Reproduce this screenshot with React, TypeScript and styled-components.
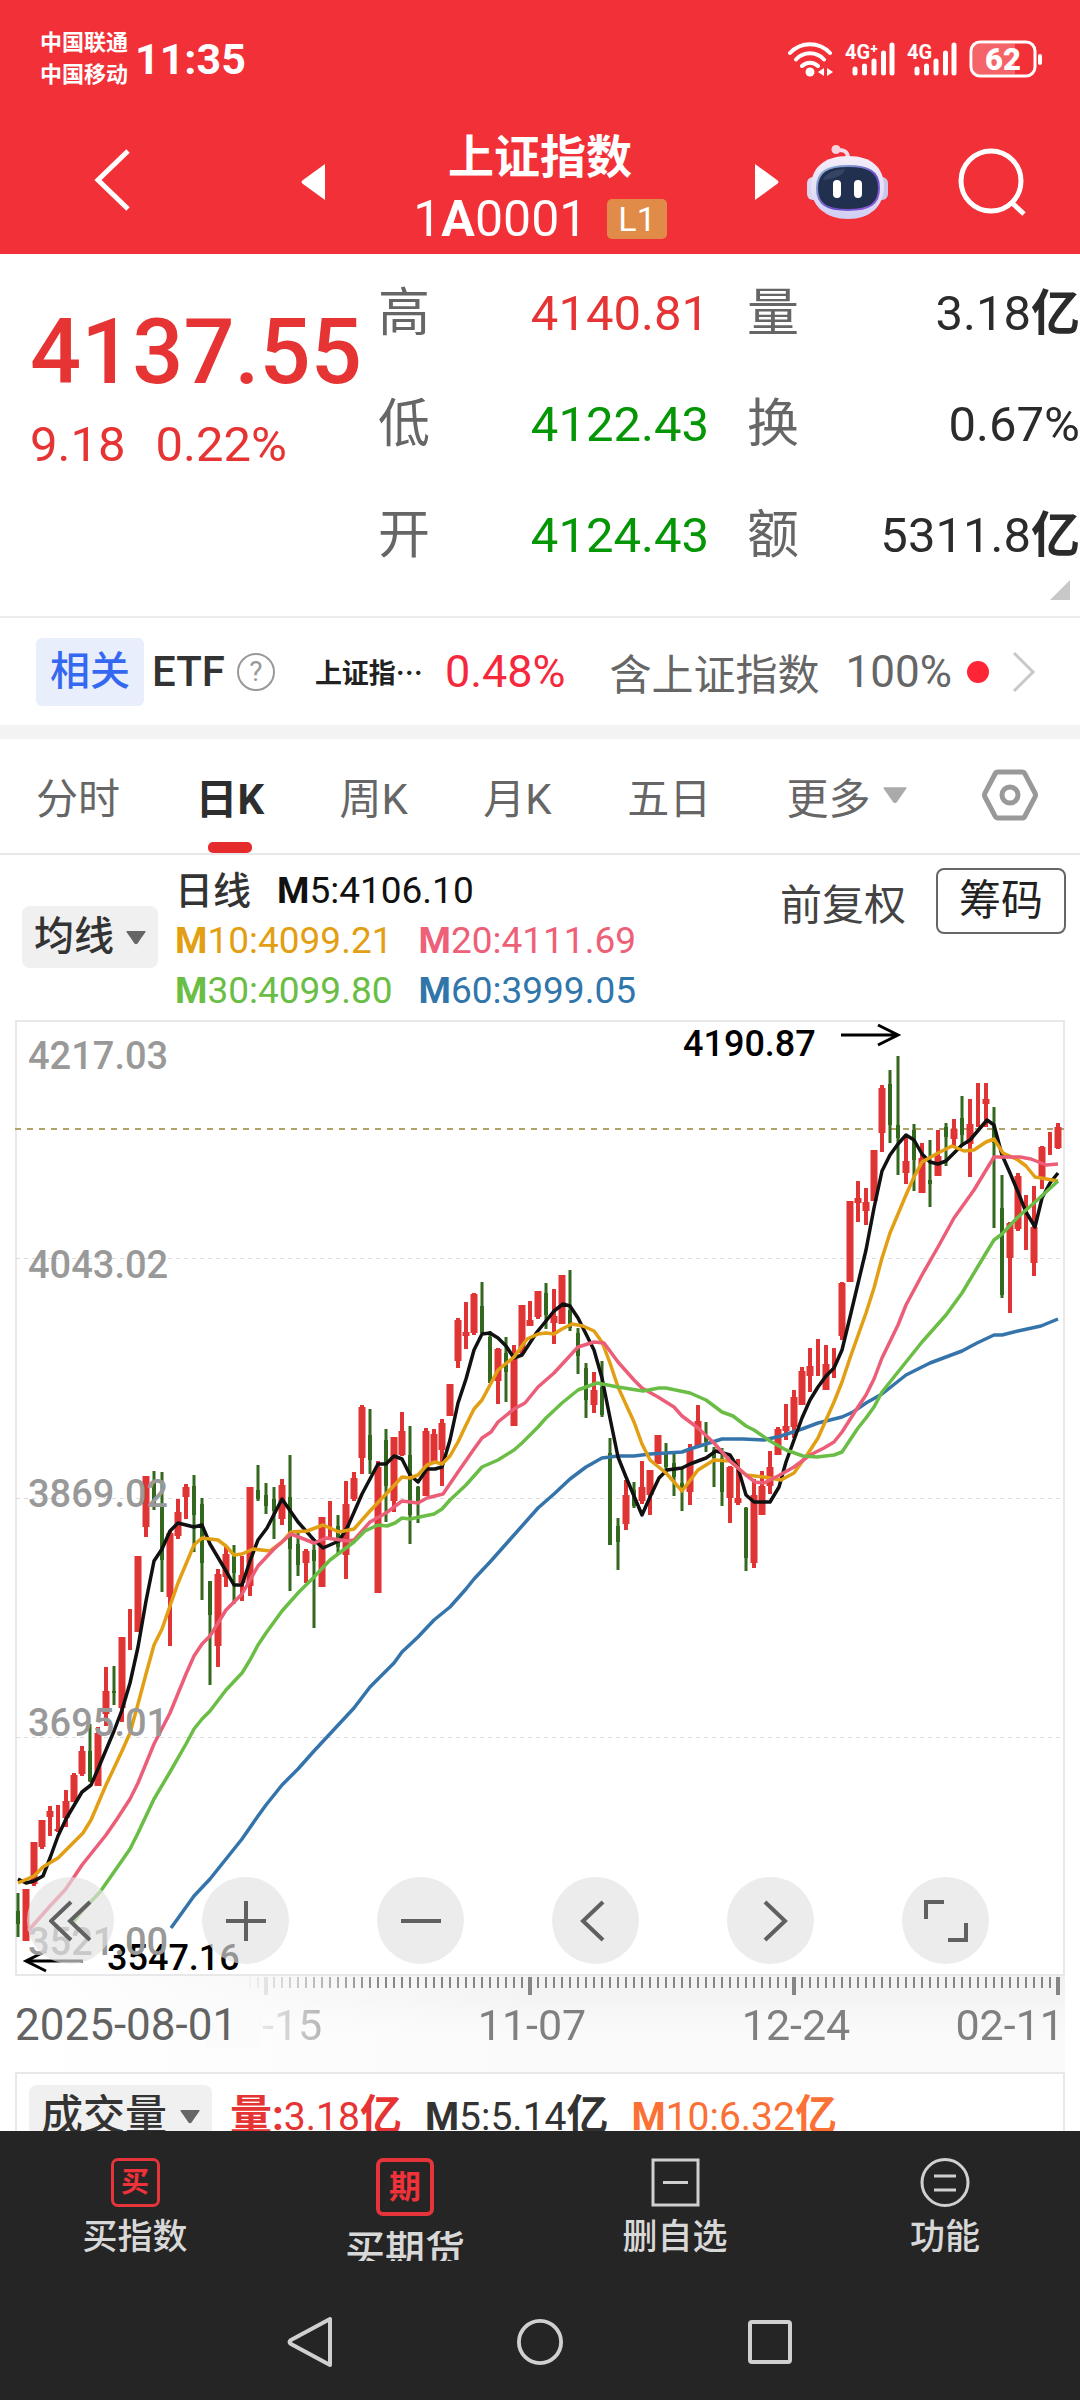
import React from "react";
import styled, { createGlobalStyle } from "styled-components";

const RED = "#f23037";
const UP = "#e63333";
const DOWN = "#059605";

const GlobalStyle = createGlobalStyle`
  *, *::before, *::after { box-sizing: border-box; }
  body {
    margin: 0;
    background: #fff;
    color: #333;
    font-family: Roboto, "Noto Sans CJK SC", sans-serif;
    white-space: nowrap;
  }
  button, select {
    font: inherit;
    color: inherit;
    border: 0;
    margin: 0;
    padding: 0;
    background: none;
    cursor: pointer;
  }
  svg { display: block; flex: none; }
  h1, dl, dd, dt, p { margin: 0; font-weight: inherit; }
`;

const Screen = styled.div`
  display: flex;
  flex-direction: column;
  height: 100vh;
  overflow: hidden;
`;

/* ---------- header ---------- */

const Header = styled.header`
  flex: none;
  background: ${RED};
  color: #fff;
`;

const StatusBar = styled.div`
  display: flex;
  align-items: center;
  height: 110px;
  padding: 8px 37px 0 40px;
`;

const Carriers = styled.div`
  font-size: 22px;
  font-weight: 700;
  line-height: 32px;
`;

const Clock = styled.time`
  margin-left: 7px;
  font-size: 43px;
  font-weight: 700;
  line-height: 48px;
`;

const StatusIcons = styled.div`
  display: flex;
  align-items: center;
  gap: 12px;
  margin-left: auto;
`;

const TitleBar = styled.div`
  display: grid;
  grid-template-columns: 1fr 478px 1fr;
  align-items: center;
  height: 144px;
`;

const BackArea = styled.div`
  padding: 0 0 0 94px;
`;

const IndexSwitcher = styled.div`
  display: flex;
  align-items: center;
  justify-content: space-between;
`;

const IndexTitle = styled.div`
  display: flex;
  flex-direction: column;
  align-items: center;
  padding-top: 10px;
`;

const IndexName = styled.h1`
  font-size: 46px;
  font-weight: 700;
  line-height: 64px;
`;

const IndexCode = styled.p`
  display: flex;
  align-items: center;
  gap: 20px;
  font-size: 50px;
  line-height: 60px;
`;

const LevelBadge = styled.span`
  padding: 0 11px;
  border-radius: 5px;
  background: #e08c48;
  font-size: 34px;
  line-height: 40px;
`;

const TitleActions = styled.div`
  display: flex;
  align-items: center;
  justify-content: space-between;
  padding: 0 54px 0 28px;
`;

/* ---------- quote ---------- */

const Quote = styled.section`
  position: relative;
  flex: none;
  display: grid;
  grid-template-columns: 378fr 702fr;
  padding: 4px 0 25px;
  border-bottom: 2px solid #ececec;
`;

const PriceBlock = styled.div`
  padding: 45px 0 0 30px;
  color: ${UP};
`;

const Price = styled.p`
  font-size: 90px;
  font-weight: 500;
  line-height: 100px;
`;

const Change = styled.p`
  display: flex;
  gap: 30px;
  margin-top: 12px;
  font-size: 49px;
  line-height: 60px;
`;

const Stats = styled.dl`
  display: grid;
  grid-template-columns: 331fr 333fr;
  column-gap: 38px;
  grid-auto-rows: 111px;
`;

const Stat = styled.div`
  display: flex;
  align-items: center;
  justify-content: space-between;
  font-size: 49px;
  line-height: 60px;

  dt { font-size: 52px; color: #666; }
`;

const StatValue = styled.dd<{ $color: string }>`
  color: ${(p) => p.$color};
  b { font-weight: 700; }
`;

const ExpandCorner = styled.span`
  position: absolute;
  right: 10px;
  bottom: 16px;
  width: 20px;
  height: 20px;
  background: #c8c8c8;
  clip-path: polygon(100% 0, 100% 100%, 0 100%);
`;

/* ---------- related fund strip ---------- */

const Related = styled.section`
  flex: none;
  display: flex;
  align-items: center;
  height: 107px;
  padding: 0 44px 0 36px;
  font-size: 42px;
`;

const RelatedTag = styled.span`
  padding: 0 14px;
  border-radius: 6px;
  background: #e8eefc;
  color: #3568f0;
  font-size: 40px;
  font-weight: 500;
  line-height: 68px;
`;

const RelatedKind = styled.span`
  margin: 0 12px 0 8px;
  font-weight: 500;
`;

const HelpButton = styled.button`
  width: 38px;
  height: 38px;
  border: 2px solid #999;
  border-radius: 50%;
  color: #999;
  font-size: 28px;
  line-height: 32px;
`;

const FundName = styled.span`
  margin-left: 40px;
  color: #222;
  font-size: 27px;
  font-weight: 700;
`;

const FundChange = styled.span`
  margin-left: 22px;
  color: #f5283c;
  font-size: 45px;
`;

const FundHolding = styled.a`
  display: flex;
  flex: 1;
  align-items: center;
  margin-left: 44px;
  color: #666;
  text-decoration: none;

  svg { margin-left: auto; }
`;

const Share = styled.span`
  margin-left: 26px;
  font-size: 44px;
`;

const Dot = styled.i`
  width: 22px;
  height: 22px;
  margin-left: 15px;
  border-radius: 50%;
  background: #ff2436;
`;

/* ---------- period tabs ---------- */

const Tabs = styled.nav`
  flex: none;
  display: flex;
  align-items: stretch;
  justify-content: space-between;
  height: 130px;
  padding: 0 42px 0 36px;
  border-top: 14px solid #f3f3f3;
  border-bottom: 2px solid #e8e8e8;
`;

const Tab = styled.button<{ $active?: boolean }>`
  position: relative;
  display: flex;
  align-items: center;
  gap: 12px;
  padding-bottom: 2px;
  color: ${(p) => (p.$active ? "#2e2e2e" : "#666")};
  font-size: 42px;
  font-weight: ${(p) => (p.$active ? 700 : 400)};

  &::after {
    content: "";
    display: ${(p) => (p.$active ? "block" : "none")};
    position: absolute;
    bottom: 0;
    left: 50%;
    width: 44px;
    height: 11px;
    margin-left: -22px;
    border-radius: 5px;
    background: #e62b2d;
  }
`;

/* ---------- indicators ---------- */

const Indicators = styled.section`
  flex: none;
  display: flex;
  align-items: flex-start;
  padding: 11px 14px 4px 22px;
`;

const Picker = styled.label<{ $top: number }>`
  display: flex;
  align-items: center;
  gap: 12px;
  height: 62px;
  margin-top: ${(p) => p.$top}px;
  padding: 0 12px;
  border-radius: 8px;
  background: #f0f0f0;
  color: #333;
`;

const PickerSelect = styled.select<{ $size: number }>`
  appearance: none;
  outline: none;
  font-size: ${(p) => p.$size}px;
  font-weight: 500;
  line-height: 60px;
`;

const Averages = styled.div`
  display: grid;
  margin-left: 17px;
  font-size: 37px;
  line-height: 50px;
`;

const AverageRow = styled.div<{ $gap: number }>`
  display: flex;
  gap: ${(p) => p.$gap}px;
`;

const LineName = styled.span`
  font-size: 38px;
  font-weight: 500;
`;

const Average = styled.span<{ $color: string }>`
  color: ${(p) => p.$color};
  b { font-weight: 700; }
`;

const ChartOptions = styled.div`
  display: flex;
  align-items: center;
  gap: 30px;
  margin: 2px 0 0 auto;
  color: #444;
  font-size: 42px;
`;

const ChipButton = styled.button`
  width: 130px;
  height: 66px;
  border: 2px solid #666;
  border-radius: 8px;
  color: #222;
  line-height: 60px;
`;

/* ---------- chart ---------- */

const ChartPanel = styled.section`
  position: relative;
  flex: none;
  margin: 0 15px;

  svg { width: 100%; height: auto; }
`;

const ChartTools = styled.div`
  position: absolute;
  right: 76px;
  bottom: 12px;
  left: 12px;
  display: flex;
  justify-content: space-between;
`;

const ToolButton = styled.button`
  display: grid;
  place-items: center;
  width: 87px;
  height: 87px;
  border-radius: 50%;
  background: rgba(226, 226, 226, 0.66);

  svg { width: 44px; height: 44px; }
`;

const Axis = styled.div`
  position: relative;
  flex: none;
  margin: 0 15px;
  background:
    linear-gradient(90deg, #fff, rgba(255, 255, 255, 0) 50%),
    linear-gradient(#f1f1f1, #fafafa 60%);

  svg { width: 100%; height: auto; }
`;

const VolumePanel = styled.section`
  flex: 1;
  display: flex;
  align-items: flex-start;
  min-height: 0;
  margin: 0 15px;
  padding-left: 12px;
  border: solid #e8e8e8;
  border-width: 2px 2px 0;
  overflow: hidden;
`;

const VolumeFigures = styled.div`
  display: flex;
  gap: 23px;
  margin: 12px 0 0 18px;
  font-size: 39px;
  line-height: 60px;

  em { font-style: normal; font-weight: 700; font-size: 42px; }
`;

/* ---------- bottom bars ---------- */

const BottomBar = styled.footer`
  flex: none;
  background: #252525;
  color: #d8d8d8;
`;

const Actions = styled.nav`
  display: grid;
  grid-template-columns: repeat(4, 1fr);
  height: 153px;
  padding-top: 27px;
`;

const Action = styled.button<{ $large?: boolean }>`
  display: flex;
  flex-direction: column;
  align-items: center;
  gap: ${(p) => (p.$large ? 15 : 13)}px;
  font-size: ${(p) => (p.$large ? 40 : 35)}px;
  font-weight: 500;
  line-height: ${(p) => (p.$large ? 40 : 36)}px;
`;

const ActionLabel = styled.span<{ $clip?: boolean }>`
  height: ${(p) => (p.$clip ? "30px" : "auto")};
  overflow: ${(p) => (p.$clip ? "hidden" : "visible")};
`;

const Glyph = styled.span<{ $size: number }>`
  display: grid;
  place-items: center;
  width: ${(p) => p.$size}px;
  height: ${(p) => p.$size}px;
  border: ${(p) => (p.$size > 50 ? 4 : 3)}px solid #e5343a;
  border-radius: 7px;
  color: #f0323a;
  font-size: ${(p) => (p.$size > 50 ? 32 : 28)}px;
  font-weight: 700;
`;

const SystemKeys = styled.div`
  display: flex;
  justify-content: center;
  gap: 184px;
  height: 116px;
  padding-top: 32px;
`;

const SystemKey = styled.button`
  width: 46px;
  height: 52px;
`;

/* ---------- data ---------- */

// One trading day: high, body top, body bottom, low (plot units), rising flag.
type Candle = [number, number, number, number, 0 | 1];

const candles: Candle[] = [
  [873, 891, 904, 917, 0], [869, 869, 921, 921, 1], [822, 822, 864, 866, 1], [800, 800, 827, 829, 1],
  [786, 791, 797, 816, 1], [785, 809, 811, 812, 1], [770, 781, 798, 807, 1], [753, 755, 782, 782, 1],
  [726, 731, 754, 756, 1], [704, 731, 761, 762, 0], [707, 713, 766, 766, 1], [647, 671, 694, 706, 1],
  [646, 671, 673, 685, 0], [617, 617, 688, 702, 1], [589, 610, 610, 630, 1], [536, 536, 612, 612, 1],
  [456, 456, 507, 517, 1], [451, 463, 484, 490, 0], [452, 485, 540, 572, 0], [511, 513, 577, 626, 1],
  [479, 492, 516, 519, 1], [464, 467, 477, 499, 1], [455, 466, 495, 532, 0], [478, 484, 543, 580, 0],
  [561, 561, 595, 665, 0], [549, 554, 626, 647, 1], [527, 534, 557, 567, 1], [525, 536, 553, 584, 0],
  [536, 555, 563, 581, 1], [467, 467, 566, 576, 1], [445, 470, 479, 481, 0], [463, 475, 486, 494, 0],
  [467, 479, 491, 519, 0], [459, 465, 499, 505, 1], [435, 477, 529, 571, 0], [513, 524, 545, 556, 0],
  [529, 531, 543, 563, 1], [522, 530, 541, 608, 0], [497, 497, 567, 567, 1], [481, 500, 500, 518, 1],
  [495, 506, 527, 534, 0], [461, 484, 535, 559, 1], [452, 458, 479, 481, 1], [385, 387, 438, 454, 1],
  [389, 415, 440, 454, 0], [441, 447, 573, 573, 1], [409, 420, 466, 502, 0], [417, 417, 481, 492, 1],
  [392, 411, 435, 436, 1], [406, 435, 495, 524, 0], [466, 467, 481, 503, 0], [408, 411, 476, 476, 1],
  [409, 414, 442, 442, 1], [399, 403, 430, 466, 1], [364, 364, 396, 396, 1], [298, 300, 341, 348, 1],
  [282, 312, 316, 329, 1], [273, 274, 313, 315, 1], [262, 286, 313, 313, 0], [311, 317, 363, 363, 0],
  [328, 329, 361, 384, 1], [317, 333, 352, 382, 0], [325, 339, 406, 406, 1], [285, 285, 333, 335, 1],
  [281, 300, 306, 306, 1], [271, 271, 297, 299, 1], [263, 273, 295, 309, 0], [269, 296, 303, 324, 1],
  [255, 255, 304, 304, 1], [250, 290, 308, 311, 0], [308, 313, 336, 354, 0], [343, 348, 380, 398, 0],
  [352, 370, 385, 393, 1], [341, 367, 395, 397, 0], [418, 433, 525, 525, 0], [498, 506, 522, 550, 0],
  [460, 475, 504, 510, 1], [462, 470, 486, 488, 0], [441, 467, 481, 484, 1], [450, 450, 475, 495, 1],
  [415, 415, 444, 444, 1], [423, 433, 447, 453, 0], [433, 443, 457, 476, 0], [449, 463, 472, 491, 0],
  [424, 430, 472, 485, 1], [385, 401, 427, 427, 1], [402, 415, 422, 432, 0], [427, 430, 438, 467, 0],
  [428, 438, 472, 486, 0], [446, 447, 478, 503, 1], [439, 478, 483, 485, 1], [487, 488, 538, 551, 0],
  [459, 475, 543, 548, 1], [451, 466, 495, 495, 1], [431, 447, 466, 474, 1], [407, 409, 435, 435, 1],
  [384, 406, 411, 420, 1], [370, 377, 407, 418, 1], [347, 351, 385, 385, 1], [328, 346, 356, 372, 1],
  [319, 349, 349, 356, 1], [325, 344, 370, 370, 1], [328, 348, 348, 358, 1], [262, 263, 316, 320, 1],
  [181, 181, 262, 262, 1], [161, 178, 183, 202, 1], [168, 182, 191, 205, 1], [130, 130, 181, 181, 1],
  [65, 68, 113, 132, 1], [50, 64, 105, 123, 0], [36, 105, 118, 155, 0], [117, 141, 153, 164, 1],
  [104, 110, 140, 171, 0], [123, 138, 173, 173, 1], [120, 160, 164, 187, 0], [110, 136, 156, 156, 1],
  [103, 107, 117, 146, 0], [99, 109, 119, 128, 1], [76, 98, 115, 125, 0], [79, 104, 124, 157, 1],
  [63, 90, 90, 107, 1], [63, 79, 84, 107, 1], [87, 105, 123, 208, 0], [155, 188, 275, 278, 0],
  [202, 203, 238, 293, 1], [153, 156, 209, 211, 1], [175, 200, 200, 230, 1], [166, 207, 243, 256, 1],
  [126, 127, 157, 169, 1], [112, 120, 120, 135, 1], [103, 107, 128, 129, 1],
];

const averageLines = [
  { color: "#3574ab", points: "156,908 179,876 195,859 211,839 227,819 243,796 251,785 267,765 283,749 299,731 339,688 355,667 371,651 379,643 387,632 403,617 419,600 435,587 451,569 459,559 475,542 491,524 523,488 539,474 555,459 571,447 587,438 603,436 619,436 635,434 667,432 675,429 707,419 728,419 749,420 766,416 787,409 803,403 827,397 838,392 851,383 867,374 891,355 915,343 947,331 962,323 979,315 987,315 1003,311 1026,306 1043,299" },
  { color: "#111", points: "3,859 11,863 19,861 28,856 35,838 43,816 51,799 67,772 76,765 83,749 99,711 107,690 115,663 123,627 131,581 139,541 147,529 155,511 163,503 179,507 187,505 195,524 211,551 219,565 227,565 235,541 243,520 252,508 267,479 283,502 299,520 308,528 324,521 333,506 347,474 363,444 371,444 379,436 387,439 395,455 403,462 412,449 420,449 427,447 435,420 443,383 451,359 459,330 467,314 475,313 483,318 491,326 499,338 507,335 522,312 531,301 539,291 548,284 555,286 563,298 579,330 587,358 595,398 603,437 611,457 619,476 627,495 635,477 644,458 652,450 667,448 675,444 691,438 701,431 715,435 723,448 731,475 739,482 755,482 764,467 771,442 779,420 787,398 795,380 803,367 811,356 819,348 827,330 835,297 851,230 859,188 867,151 875,135 883,124 891,115 899,120 907,134 915,142 923,144 931,141 947,125 955,120 972,100 979,105 987,135 995,153 1003,172 1011,192 1020,207 1027,178 1035,163 1043,153" },
  { color: "#e39f13", points: "3,863 19,856 28,847 43,838 57,824 68,813 76,800 91,765 107,731 115,713 123,684 131,654 139,625 147,609 163,563 179,525 187,518 203,520 211,526 219,535 227,534 238,529 255,531 267,522 276,512 292,511 308,505 324,512 339,509 355,491 371,474 387,457 395,458 403,455 412,445 420,442 427,444 435,436 443,422 451,405 459,389 467,380 483,350 499,337 512,319 523,314 531,313 539,314 547,309 557,304 568,306 579,311 587,322 595,343 603,367 619,402 627,424 635,440 651,453 667,471 683,450 699,440 715,441 731,455 749,457 766,460 779,453 792,435 803,418 819,382 827,362 835,338 851,293 859,268 867,238 875,213 891,175 899,157 907,142 923,133 937,126 949,131 959,130 971,122 979,119 988,133 1003,140 1011,146 1020,157 1043,161" },
  { color: "#ec5d78", points: "13,911 35,886 50,870 59,857 67,845 91,815 102,799 115,779 123,763 139,724 155,693 171,654 179,636 187,624 195,616 211,590 227,574 243,546 259,529 276,514 299,523 311,518 333,521 339,520 355,502 371,493 387,481 403,483 412,478 428,474 443,452 459,429 467,418 476,412 483,402 499,389 510,383 523,367 531,360 539,353 563,327 579,322 589,323 603,342 619,360 627,368 643,377 659,387 667,396 683,408 699,423 715,441 731,455 740,462 749,463 763,456 779,447 795,435 809,428 819,422 827,412 843,387 851,375 859,359 867,338 883,305 891,285 907,255 923,227 939,198 959,170 979,137 1005,137 1016,139 1031,145 1043,144" },
  { color: "#6abd45", points: "57,904 67,891 85,872 99,852 115,829 123,813 139,779 155,752 171,724 179,709 187,699 195,691 211,670 227,653 235,640 243,625 251,613 267,591 283,573 299,557 315,540 339,522 350,511 363,505 372,506 380,503 387,498 395,499 419,494 427,489 435,480 451,465 467,447 483,440 499,430 507,423 523,407 531,398 547,383 563,370 571,367 582,363 603,367 628,371 644,368 651,368 675,373 691,380 707,392 718,396 731,406 739,410 755,421 771,430 788,436 802,437 819,435 827,432 843,408 851,398 859,387 867,372 883,352 907,322 931,295 947,273 962,248 971,233 979,220 987,214 1003,197 1019,183 1031,172 1043,161" },
];

const priceMarks = [
  { y: 49, text: "4217.03" },
  { y: 258, text: "4043.02" },
  { y: 487, text: "3869.02" },
  { y: 716, text: "3695.01" },
  { y: 935, text: "3521.00" },
];

const stats = [
  { label: "高", value: "4140.81", color: UP },
  { label: "量", value: "3.18", unit: "亿", color: "#2b2b2b" },
  { label: "低", value: "4122.43", color: DOWN },
  { label: "换", value: "0.67%", color: "#2b2b2b" },
  { label: "开", value: "4124.43", color: DOWN },
  { label: "额", value: "5311.8", unit: "亿", color: "#2b2b2b" },
];

const averages = [
  [{ days: "10", value: "4099.21", color: "#e39f13" }, { days: "20", value: "4111.69", color: "#ee5f78" }],
  [{ days: "30", value: "4099.80", color: "#6abd45" }, { days: "60", value: "3999.05", color: "#3076ab" }],
];

/* ---------- drawings ---------- */

const Caret = ({ size = 20, color = "#666" }: { size?: number; color?: string }) => (
  <svg width={size} height={size * 0.75} viewBox="0 0 20 15" aria-hidden="true">
    <path d="M1 1h18q1 0 .5 1L11.500 13.500q-1.500 1.500-3 0L.5 2Q0 1 1 1z" fill={color} />
  </svg>
);

const WifiIcon = () => (
  <svg width="45" height="36" viewBox="0 0 45 36" fill="none" stroke="#fff" strokeWidth="4" strokeLinecap="round">
    <path d="M2 12a27 27 0 0 1 40 0M8 18.500a19 19 0 0 1 28 0M14 25a11.500 11.500 0 0 1 16 0" />
    <circle cx="22" cy="31" r="4.500" fill="#fff" stroke="none" />
    <path d="M36 27v8l-6-4zM39 27v8l6-4z" fill="#fff" stroke="none" />
  </svg>
);

const SignalIcon = ({ label }: { label: string }) => (
  <svg width="50" height="36" viewBox="0 0 50 36">
    <g stroke="#fff" strokeWidth="5" strokeLinecap="round">
      <path d="M10 28v4M19.500 25v7M29 20v12M38.500 12v20M47 4v28" />
    </g>
    <text x="0" y="18" fontSize="20" fontWeight="700" fill="#fff">{label}</text>
  </svg>
);

const BatteryIcon = () => (
  <svg width="74" height="38" viewBox="0 0 74 38">
    <rect x="2" y="2" width="64" height="34" rx="9" fill="none" stroke="#fff" strokeWidth="3" />
    <path d="M11 3.500h35v31H11q-7 0-7-7v-17q0-7 7-7z" fill="#fff" fillOpacity=".25" />
    <rect x="69" y="14" width="4" height="11" rx="2" fill="#fff" />
    <text x="34" y="30" fontSize="31" fontWeight="900" fill="#fff" textAnchor="middle">62</text>
  </svg>
);

const RobotIcon = () => (
  <svg width="81" height="76" viewBox="0 0 81 76">
    <defs>
      <linearGradient id="shell" x1="0" y1="0" x2="0" y2="1">
        <stop offset="0" stopColor="#f4edf8" />
        <stop offset=".6" stopColor="#e3def5" />
        <stop offset="1" stopColor="#cfcdf3" />
      </linearGradient>
      <linearGradient id="rim" x1="0" y1="0" x2="1" y2="1">
        <stop offset="0" stopColor="#8fc4d8" />
        <stop offset=".6" stopColor="#6b4fc9" />
        <stop offset="1" stopColor="#9b5bd8" />
      </linearGradient>
    </defs>
    <path d="M30 6q11-1 11 8" fill="none" stroke="#f3dbe8" strokeWidth="4" />
    <circle cx="29" cy="5.500" r="4.500" fill="#f6d3df" />
    <rect x="0" y="33" width="14" height="23" rx="6" fill="#dcd6f1" />
    <rect x="67" y="33" width="14" height="23" rx="6" fill="#cbc7ec" />
    <path d="M41 12c24 0 36 12 36 31S63 75 41 75 4 62 4 43s13-31 37-31z" fill="url(#shell)" />
    <path d="M41 22c20 0 31 5 31 22 0 16-9 22-31 22s-31-6-31-22c0-17 11-22 31-22z" fill="#22304f" stroke="url(#rim)" strokeWidth="2" />
    <path d="M16 36q4-10 22-11-2 9-22 11z" fill="#435170" opacity=".6" />
    <rect x="26" y="36" width="8" height="18" rx="4" fill="#fff" />
    <rect x="47" y="36" width="8" height="18" rx="4" fill="#fff" />
  </svg>
);

const toolIcons = [
  { name: "最早", d: "M22 3 2 22l20 19M41 3 21 22l20 19" },
  { name: "放大", d: "M2 22h40M22 2v40" },
  { name: "缩小", d: "M2 22h40" },
  { name: "前移", d: "M29 3 9 22l20 19" },
  { name: "后移", d: "M16 3l20 19-20 19" },
  { name: "全屏", d: "M2 20V3h18M24 41h18V24" },
];

const toX = (day: number) => 3 + day * 8;

const PriceChart = () => (
  <svg viewBox="0 0 1050 956" role="img" aria-label="上证指数日K线">
    <rect x="1" y="1" width="1048" height="954" fill="#fff" stroke="#e8e8e8" strokeWidth="2" />
    <g stroke="#dcdcdc" strokeWidth="1" strokeDasharray="4 4">
      <path d="M1 238.500H1049M1 478.500H1049M1 717.500H1049" />
    </g>
    <path d="M0 109H1049" stroke="#b0a268" strokeWidth="2" strokeDasharray="6 6" />
    {candles.map(([high, top, bottom, low, rising], day) => {
      const color = rising ? "#e03434" : "#33691e";
      const wick = rising ? 4 : 3;
      const flat = top === bottom;
      const body = flat ? wick : rising ? 7 : 4;
      return (
        <g key={day} fill={color}>
          <rect x={toX(day) - wick / 2} y={high} width={wick} height={low - high} />
          <rect x={toX(day) - body / 2} y={top} width={body} height={bottom - top} />
        </g>
      );
    })}
    {averageLines.map((line) => (
      <polyline key={line.color} points={line.points} fill="none" stroke={line.color} strokeWidth="3.5" strokeLinejoin="round" />
    ))}
    <g fill="none" stroke="#000" strokeWidth="3">
      <path d="M826 15h56M863 5l20 10-20 10" />
      <path d="M68 941H12M31 931l-20 10 20 10" />
    </g>
    <g fontSize="36" fontWeight="500" fill="#000">
      <text x="668" y="36">4190.87</text>
      <text x="92" y="950">3547.16</text>
    </g>
    <g fontSize="38" fontWeight="500" fill="#999">
      {priceMarks.map((mark) => (
        <text key={mark.text} x="13" y={mark.y}>{mark.text}</text>
      ))}
    </g>
  </svg>
);

const TimeAxis = () => (
  <svg viewBox="0 0 1050 96" role="img" aria-label="日期">
    <defs>
      <linearGradient id="fade" gradientUnits="userSpaceOnUse" x1="225" y1="0" x2="370" y2="0">
        <stop offset="0" stopColor="#000" />
        <stop offset="1" stopColor="#fff" />
      </linearGradient>
      <mask id="reveal">
        <rect width="1050" height="96" fill="url(#fade)" />
      </mask>
    </defs>
    <g mask="url(#reveal)">
      {candles.map((_, day) => {
        const major = day % 33 === 31;
        const width = major ? 4 : 2;
        return day < 29 ? null : (
          <rect key={day} x={toX(day) - width / 2} y="1" width={width} height={major ? 18 : 11} fill="#858585" />
        );
      })}
      <rect x={toX(130) - 2} y="1" width="4" height="18" fill="#858585" />
      <g fontSize="43" fill="#808080">
        <text x="253" y="64" textAnchor="middle">09-15</text>
        <text x="517" y="64" textAnchor="middle">11-07</text>
        <text x="781" y="64" textAnchor="middle">12-24</text>
        <text x="1049" y="64" textAnchor="end">02-11</text>
      </g>
    </g>
    <rect x="190" y="26" width="54" height="46" fill="#fbfbfb" />
    <text x="0" y="64" fontSize="44" fill="#636363">2025-08-01</text>
  </svg>
);

export default function App() {
  return (
    <Screen>
      <GlobalStyle />
      <Header>
        <StatusBar>
          <Carriers>
            <div>中国联通</div>
            <div>中国移动</div>
          </Carriers>
          <Clock>11:35</Clock>
          <StatusIcons>
            <WifiIcon />
            <SignalIcon label="4G⁺" />
            <SignalIcon label="4G" />
            <BatteryIcon />
          </StatusIcons>
        </StatusBar>
        <TitleBar>
          <BackArea>
            <button aria-label="返回">
              <svg width="38" height="64" viewBox="0 0 38 64" fill="none" stroke="#fff" strokeWidth="5">
                <path d="M34 3 4 32l30 29" />
              </svg>
            </button>
          </BackArea>
          <IndexSwitcher>
            <button aria-label="上一个">
              <svg width="24" height="36" viewBox="0 0 24 36"><path d="M24 0v36L2 20q-3-2 0-4z" fill="#fff" /></svg>
            </button>
            <IndexTitle>
              <IndexName>上证指数</IndexName>
              <IndexCode>
                <span>1<b>A</b>0001</span>
                <LevelBadge>L1</LevelBadge>
              </IndexCode>
            </IndexTitle>
            <button aria-label="下一个">
              <svg width="24" height="36" viewBox="0 0 24 36"><path d="M0 0v36l22-16q3-2 0-4z" fill="#fff" /></svg>
            </button>
          </IndexSwitcher>
          <TitleActions>
            <button aria-label="智能助手"><RobotIcon /></button>
            <button aria-label="搜索">
              <svg width="68" height="68" viewBox="0 0 68 68" fill="none" stroke="#fff" strokeWidth="5">
                <circle cx="33" cy="33" r="30" />
                <path d="M53 54l13 12" />
              </svg>
            </button>
          </TitleActions>
        </TitleBar>
      </Header>

      <Quote>
        <PriceBlock>
          <Price>4137.55</Price>
          <Change><span>9.18</span><span>0.22%</span></Change>
        </PriceBlock>
        <Stats>
          {stats.map((s) => (
            <Stat key={s.label}>
              <dt>{s.label}</dt>
              <StatValue $color={s.color}>{s.value}{s.unit && <b>{s.unit}</b>}</StatValue>
            </Stat>
          ))}
        </Stats>
        <ExpandCorner />
      </Quote>

      <Related>
        <RelatedTag>相关</RelatedTag>
        <RelatedKind>ETF</RelatedKind>
        <HelpButton aria-label="说明">?</HelpButton>
        <FundName>上证指⋯</FundName>
        <FundChange>0.48%</FundChange>
        <FundHolding href="#holding">
          含上证指数<Share>100%</Share><Dot />
          <svg width="24" height="42" viewBox="0 0 24 42" fill="none" stroke="#c8c8c8" strokeWidth="3">
            <path d="M2 2l19 19L2 40" />
          </svg>
        </FundHolding>
      </Related>

      <Tabs>
        <Tab>分时</Tab>
        <Tab $active>日K</Tab>
        <Tab>周K</Tab>
        <Tab>月K</Tab>
        <Tab>五日</Tab>
        <Tab>更多<Caret size={24} color="#aaa" /></Tab>
        <Tab aria-label="设置">
          <svg width="56" height="54" viewBox="0 0 56 54" fill="none" stroke="#999" strokeWidth="5" strokeLinejoin="round">
            <path d="M16 4h24q2 0 3 2l10 19q1 2 0 4L43 48q-1 2-3 2H16q-2 0-3-2L3 29q-1-2 0-4L13 6q1-2 3-2z" />
            <circle cx="28" cy="27" r="8" />
          </svg>
        </Tab>
      </Tabs>

      <Indicators>
        <Picker $top={40}>
          <PickerSelect $size={40} aria-label="主图指标"><option>均线</option></PickerSelect>
          <Caret />
        </Picker>
        <Averages>
          <AverageRow $gap={26}>
            <LineName>日线</LineName>
            <Average $color="#111"><b>M</b>5:4106.10</Average>
          </AverageRow>
          {averages.map((row) => (
            <AverageRow $gap={26} key={row[0].days}>
              {row.map((a) => (
                <Average $color={a.color} key={a.days}><b>M</b>{a.days}:{a.value}</Average>
              ))}
            </AverageRow>
          ))}
        </Averages>
        <ChartOptions>
          <button>前复权</button>
          <ChipButton>筹码</ChipButton>
        </ChartOptions>
      </Indicators>

      <ChartPanel>
        <PriceChart />
        <ChartTools>
          {toolIcons.map((tool) => (
            <ToolButton key={tool.name} aria-label={tool.name}>
              <svg viewBox="0 0 44 44" fill="none" stroke="#606060" strokeWidth="4"><path d={tool.d} /></svg>
            </ToolButton>
          ))}
        </ChartTools>
      </ChartPanel>
      <Axis><TimeAxis /></Axis>

      <VolumePanel>
        <Picker $top={11}>
          <PickerSelect $size={42} aria-label="副图指标"><option>成交量</option></PickerSelect>
          <Caret />
        </Picker>
        <VolumeFigures>
          <Average $color={UP}><em>量:</em>3.18<em>亿</em></Average>
          <Average $color="#333"><b>M</b>5:5.14<em>亿</em></Average>
          <Average $color="#fa7035"><b>M</b>10:6.32<em>亿</em></Average>
        </VolumeFigures>
      </VolumePanel>

      <BottomBar>
        <Actions>
          <Action><Glyph $size={49}>买</Glyph><ActionLabel>买指数</ActionLabel></Action>
          <Action $large><Glyph $size={58}>期</Glyph><ActionLabel $clip>买期货</ActionLabel></Action>
          <Action>
            <svg width="49" height="49" viewBox="0 0 49 49" fill="none" stroke="#d0d0d0" strokeWidth="3">
              <rect x="2" y="2" width="45" height="45" /><path d="M12 24.500h25" />
            </svg>
            <ActionLabel>删自选</ActionLabel>
          </Action>
          <Action>
            <svg width="50" height="49" viewBox="0 0 50 49" fill="none" stroke="#d0d0d0" strokeWidth="3">
              <circle cx="25" cy="24.500" r="23" /><path d="M14 18h22M14 32h22" />
            </svg>
            <ActionLabel>功能</ActionLabel>
          </Action>
        </Actions>
        <SystemKeys>
          <SystemKey aria-label="后退">
            <svg width="46" height="52" viewBox="0 0 46 52" fill="none" stroke="#d0d0d0" strokeWidth="4" strokeLinejoin="round">
              <path d="M43 3v46L4 28q-3-2 0-4z" />
            </svg>
          </SystemKey>
          <SystemKey aria-label="主屏幕">
            <svg width="46" height="52" viewBox="-1 0 48 52" fill="none" stroke="#d0d0d0" strokeWidth="4">
              <circle cx="23" cy="26" r="22" />
            </svg>
          </SystemKey>
          <SystemKey aria-label="最近任务">
            <svg width="46" height="52" viewBox="0 0 46 52" fill="none" stroke="#d0d0d0" strokeWidth="4">
              <rect x="3" y="6" width="40" height="40" rx="2" />
            </svg>
          </SystemKey>
        </SystemKeys>
      </BottomBar>
    </Screen>
  );
}
